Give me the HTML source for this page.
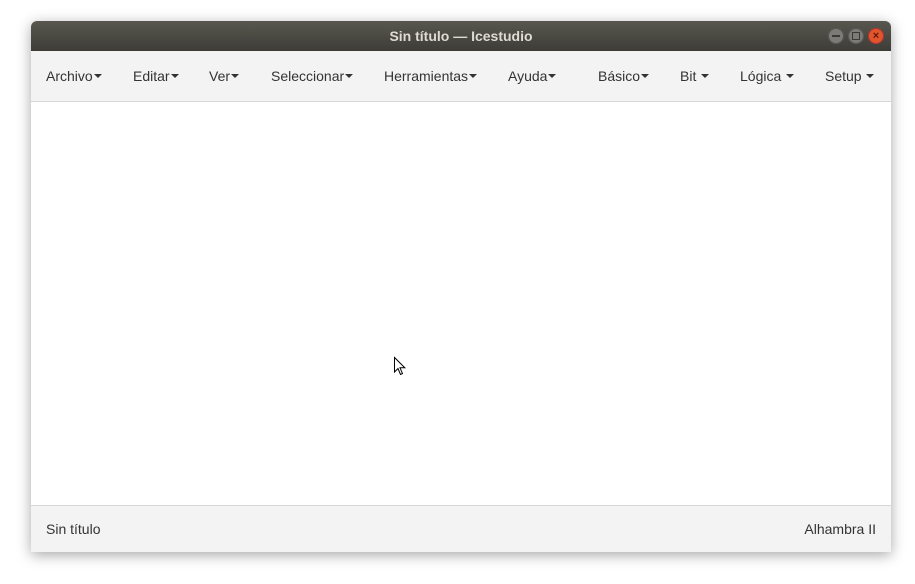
<!DOCTYPE html>
<html><head><meta charset="utf-8"><style>
html,body{margin:0;padding:0;width:915px;height:584px;background:#fff;overflow:hidden;font-family:"Liberation Sans",sans-serif}
.win{position:absolute;left:31px;top:21px;width:860px;height:531px;background:#fff;box-shadow:0 3px 14px rgba(0,0,0,.35);border-radius:6px 6px 0 0;overflow:hidden}
.title{position:absolute;left:0;top:0;width:860px;height:30px;background:linear-gradient(#58574f,#3d3c37);color:#dfdbd2;font-weight:bold;font-size:14px;text-align:center;line-height:30px}
.menu{position:absolute;left:0;top:30px;width:860px;height:50px;background:#f2f3f2;border-bottom:1px solid #d6d8d8}
.menu span{position:absolute;top:0;line-height:50px;font-size:14px;color:#333}
.c{display:inline-block;width:0;height:0;border-left:4px solid transparent;border-right:4px solid transparent;border-top:4px solid #333;vertical-align:middle;margin-left:1px;margin-top:-2px}
.foot{position:absolute;left:0;top:484px;width:860px;height:47px;background:#f2f3f2;border-top:1px solid #d6d8d8;font-size:14px;color:#333;line-height:46px}
.b{position:absolute;top:7px;width:16px;height:16px;border-radius:50%;background:#7c7b76;box-shadow:inset 0 0 0 1px #555}
</style></head><body>
<div class="win">
<div class="title">Sin título — Icestudio</div>
<div class="b" style="left:797px"><div style="position:absolute;left:4px;top:7px;width:8px;height:2px;background:#3a3a36"></div></div>
<div class="b" style="left:817px"><div style="position:absolute;left:4px;top:4px;width:6px;height:6px;border:1px solid #3a3a36"></div></div>
<div class="b" style="left:837px;background:#e2542b;box-shadow:inset 0 0 0 1px #a33"><div style="position:absolute;left:0;top:0;width:16px;line-height:16px;text-align:center;font-size:11px;color:#5a1b0b;font-weight:bold">×</div></div>
<div class="menu">
<span style="left:15px">Archivo<i class="c"></i></span>
<span style="left:102px">Editar<i class="c"></i></span>
<span style="left:178px">Ver<i class="c"></i></span>
<span style="left:240px">Seleccionar<i class="c"></i></span>
<span style="left:353px">Herramientas<i class="c"></i></span>
<span style="left:477px">Ayuda<i class="c"></i></span>
<span style="left:567px">Básico<i class="c"></i></span>
<span style="left:649px">Bit <i class="c"></i></span>
<span style="left:709px">Lógica <i class="c"></i></span>
<span style="left:794px">Setup <i class="c"></i></span>
</div>
<div class="foot"><span style="position:absolute;left:15px">Sin título</span><span style="position:absolute;right:15px">Alhambra II</span></div>
</div>
<svg style="position:absolute;left:393px;top:356px" width="14" height="21" viewBox="0 0 14 21"><path d="M1.5 1.5 L1.5 16 L5 12.5 L7.5 18.5 L9.5 17.6 L7 11.8 L11.8 11.8 Z" fill="#fff" stroke="#000" stroke-width="1"/></svg>
</body></html>
